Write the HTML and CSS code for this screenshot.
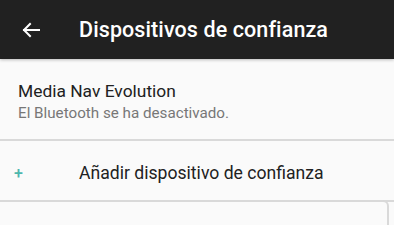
FILE: index.html
```html
<!DOCTYPE html>
<html lang="es">
<head>
<meta charset="utf-8">
<link rel="stylesheet" href="styles.css">
</head>
<body>
<div class="screen">
  <header class="appbar">
    <svg class="back" width="20" height="16" viewBox="0 0 20 16"><path d="M18 8H3M9 2L3 8l6 6" fill="none" stroke="#fff" stroke-width="2" stroke-linecap="square"/></svg>
    <h1 class="title">Dispositivos de confianza</h1>
  </header>
  <div class="item device">
    <div class="primary">Media Nav Evolution</div>
    <div class="secondary">El Bluetooth se ha desactivado.</div>
  </div>
  <div class="item add">
    <span class="plus">+</span>
    <span class="add-label">Añadir dispositivo de confianza</span>
  </div>
  <div class="card"></div>
</div>
</body>
</html>
```
FILE: styles.css
```css
html, body { margin: 0; padding: 0; }
body { background: #fafafa; font-family: Roboto, "Noto Sans", sans-serif; overflow: hidden; }
.screen { width: 394px; height: 225px; display: flex; flex-direction: column; }
.appbar {
  height: 59px; background: #212121; display: flex; align-items: center;
  box-shadow: 0 1px 3px rgba(0,0,0,0.25); position: relative; z-index: 1; flex: none;
}
.back { margin-left: 21px; margin-top: 1px; }
.title { margin: 0 0 0 38px; font-size: 21.5px; font-weight: 500; color: #fff; letter-spacing: 0.1px; }
.item { flex: none; border-bottom: 2px solid #d9d9d9; box-sizing: border-box; }
.device { height: 82px; display: flex; flex-direction: column; justify-content: center; padding-left: 18px; padding-top: 5px; }
.primary { font-size: 17.4px; color: #212121; line-height: 23px; }
.secondary { font-size: 15.2px; color: #777; line-height: 21px; }
.add { height: 61px; display: flex; align-items: center; padding-top: 5px; }
.plus { width: 79px; padding-left: 14px; box-sizing: border-box; color: #4db6ac; font-size: 16px; font-weight: 500; }
.add-label { font-size: 17.6px; color: #212121; }
.card {
  flex: 1; width: 387px; border-right: 2px solid #d9d9d9;
  border-top-right-radius: 6px; margin-top: -2px; border-top: 2px solid #d9d9d9;
}
```
